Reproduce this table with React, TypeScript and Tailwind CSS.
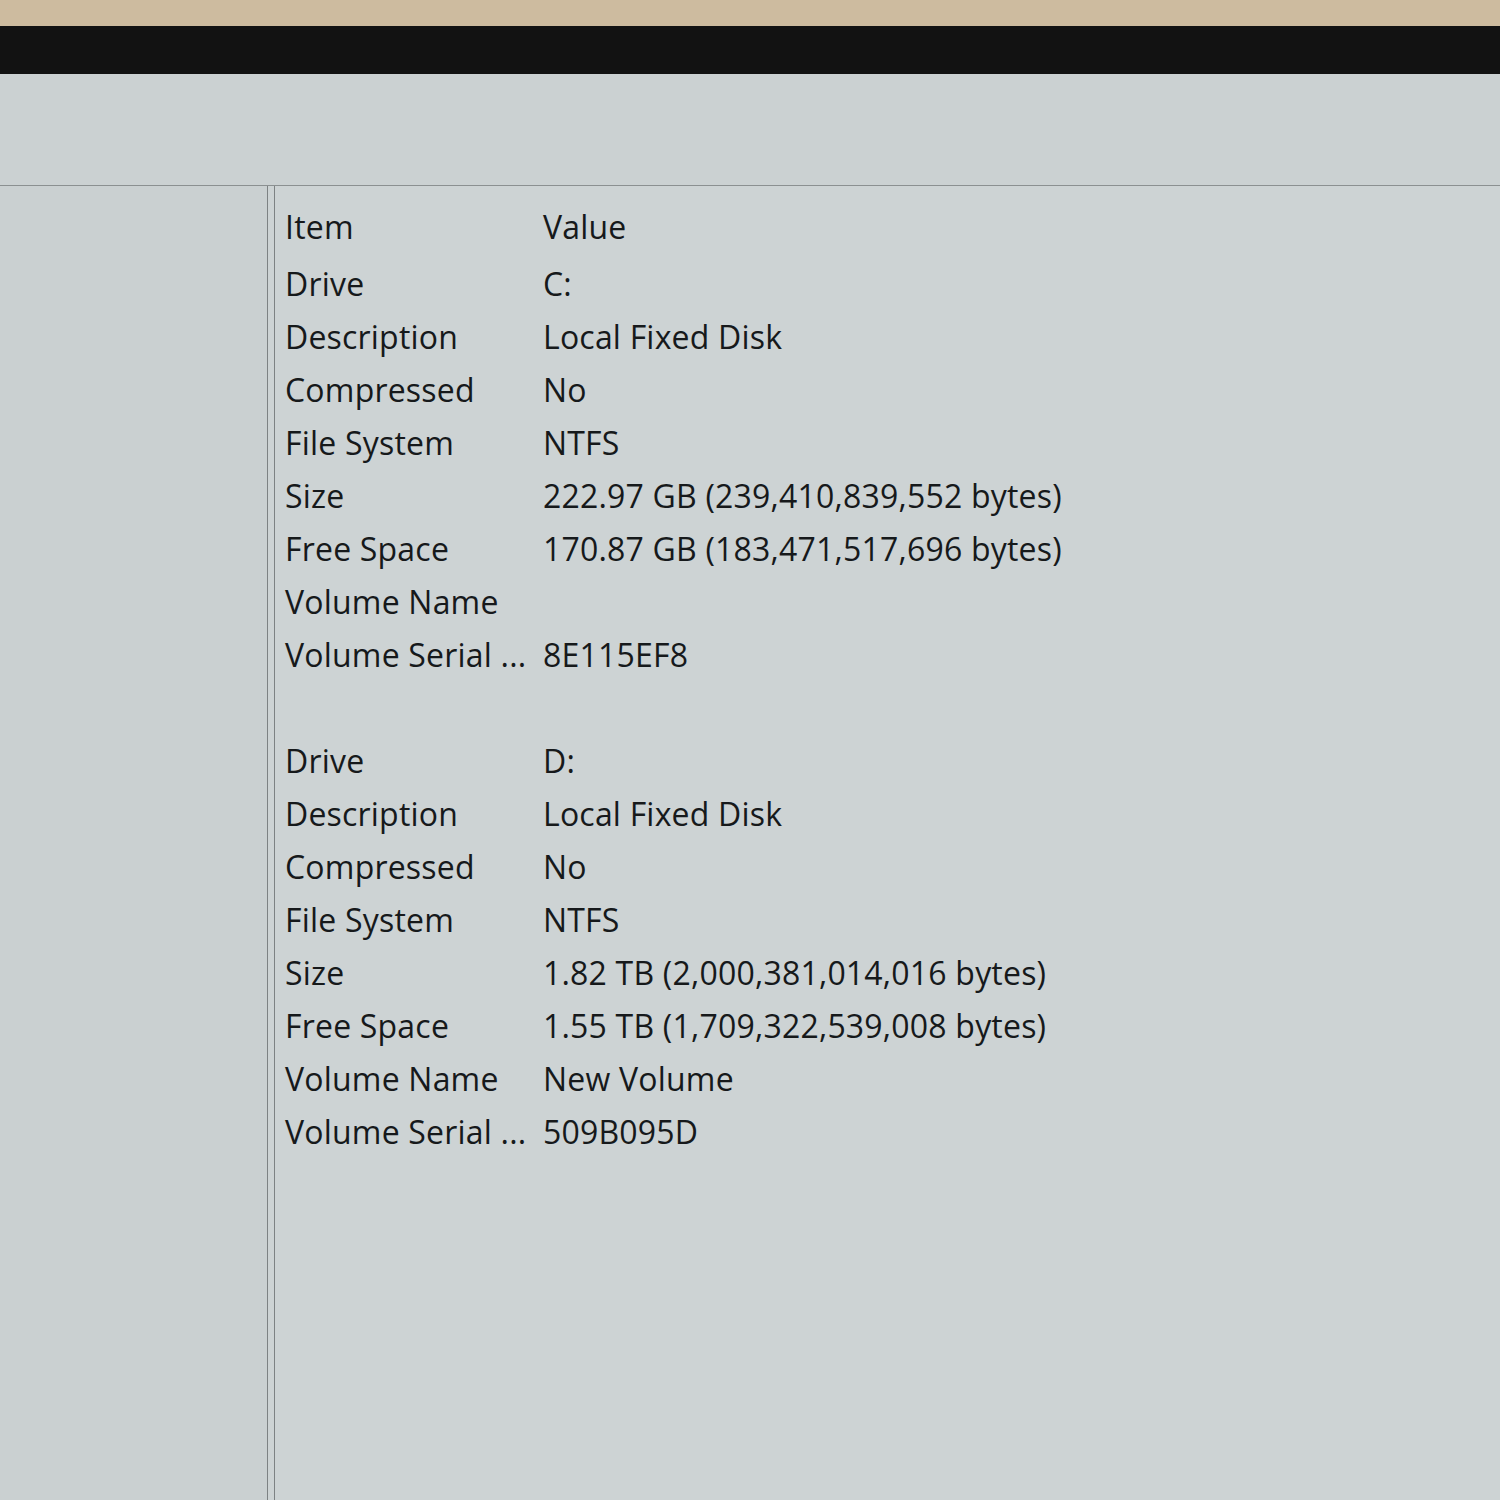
import React from 'react';

type Row = { item: string; value: string };

const driveC: Row[] = [
  { item: 'Drive', value: 'C:' },
  { item: 'Description', value: 'Local Fixed Disk' },
  { item: 'Compressed', value: 'No' },
  { item: 'File System', value: 'NTFS' },
  { item: 'Size', value: '222.97 GB (239,410,839,552 bytes)' },
  { item: 'Free Space', value: '170.87 GB (183,471,517,696 bytes)' },
  { item: 'Volume Name', value: '' },
  { item: 'Volume Serial ...', value: '8E115EF8' },
];

const driveD: Row[] = [
  { item: 'Drive', value: 'D:' },
  { item: 'Description', value: 'Local Fixed Disk' },
  { item: 'Compressed', value: 'No' },
  { item: 'File System', value: 'NTFS' },
  { item: 'Size', value: '1.82 TB (2,000,381,014,016 bytes)' },
  { item: 'Free Space', value: '1.55 TB (1,709,322,539,008 bytes)' },
  { item: 'Volume Name', value: 'New Volume' },
  { item: 'Volume Serial ...', value: '509B095D' },
];

function InfoRow({ row }: { row: Row }) {
  return (
    <div className="flex h-[53px] items-center">
      <div className="w-[258px] shrink-0 whitespace-nowrap">{row.item}</div>
      <div className="whitespace-nowrap">{row.value}</div>
    </div>
  );
}

export default function App() {
  return (
    <div
      className="flex h-[1500px] w-[1500px] flex-col overflow-hidden bg-[#cdd3d4]"
      style={{ fontFamily: '"Open Sans", "Noto Sans", sans-serif' }}
    >
      <div className="h-[26px] shrink-0 bg-[#cdbb9f]" />
      <div className="h-[48px] shrink-0 bg-[#121212]" />

      {/* toolbar area, empty */}
      <div className="h-[112px] shrink-0 border-b border-[#8b9091] bg-[#cbd1d2]" />

      <div className="flex flex-1">
        <div className="w-[268px] shrink-0 border-r border-[#7d8283] bg-[#cad0d1]" />
        <div className="ml-[6px] flex-1 border-l border-[#7d8283] bg-[#cdd3d4] pl-[10px] pt-[14px] text-[32px] leading-none tracking-[0.2px] text-[#16191b]">
          <div className="mb-[4px] flex h-[53px] items-center">
            <div className="w-[258px] shrink-0">Item</div>
            <div>Value</div>
          </div>
          {driveC.map((r, i) => (
            <InfoRow key={'c' + i} row={r} />
          ))}
          <div className="h-[53px]" />
          {driveD.map((r, i) => (
            <InfoRow key={'d' + i} row={r} />
          ))}
        </div>
      </div>
    </div>
  );
}
